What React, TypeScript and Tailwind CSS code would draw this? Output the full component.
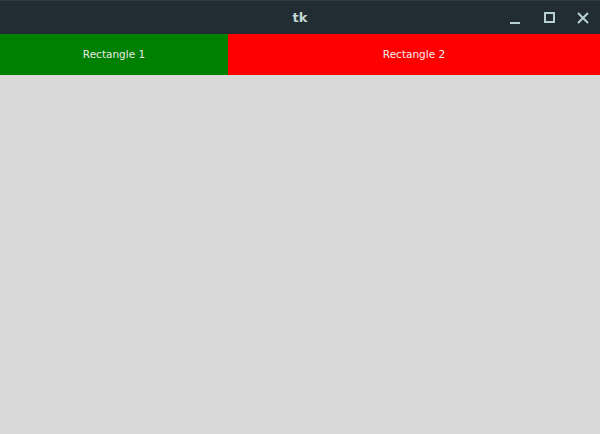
import React from "react";

const App = () => {
  return (
    <div className="w-[600px] h-[434px] bg-[#d9d9d9] flex flex-col" style={{ fontFamily: "'DejaVu Sans', sans-serif" }}>
      <div className="h-[34px] bg-[#222d33] border-t border-[#2e3a40] flex items-center relative">
        <div className="flex-1 text-center text-[13px] font-bold text-[#c5d8d6]">tk</div>
        <div className="absolute right-0 top-0 h-full flex items-center">
          <svg width="34" height="34" viewBox="0 0 34 34">
            <rect x="12" y="21" width="10" height="2" fill="#b6d1cf" />
          </svg>
          <svg width="34" height="34" viewBox="0 0 34 34">
            <rect x="13" y="12" width="9" height="9" fill="none" stroke="#b6d1cf" strokeWidth="2" />
          </svg>
          <svg width="34" height="34" viewBox="0 0 34 34">
            <path d="M12 12 L22 22 M22 12 L12 22" stroke="#b6d1cf" strokeWidth="2" />
          </svg>
        </div>
      </div>
      <div className="flex h-[41px]">
        <div className="w-[228px] bg-[#008000] flex items-center justify-center text-[10.5px] text-[#e8e8e8]">
          Rectangle 1
        </div>
        <div className="flex-1 bg-[#ff0000] flex items-center justify-center text-[10.5px] text-[#f0f0f0]">
          Rectangle 2
        </div>
      </div>
    </div>
  );
};

export default App;
